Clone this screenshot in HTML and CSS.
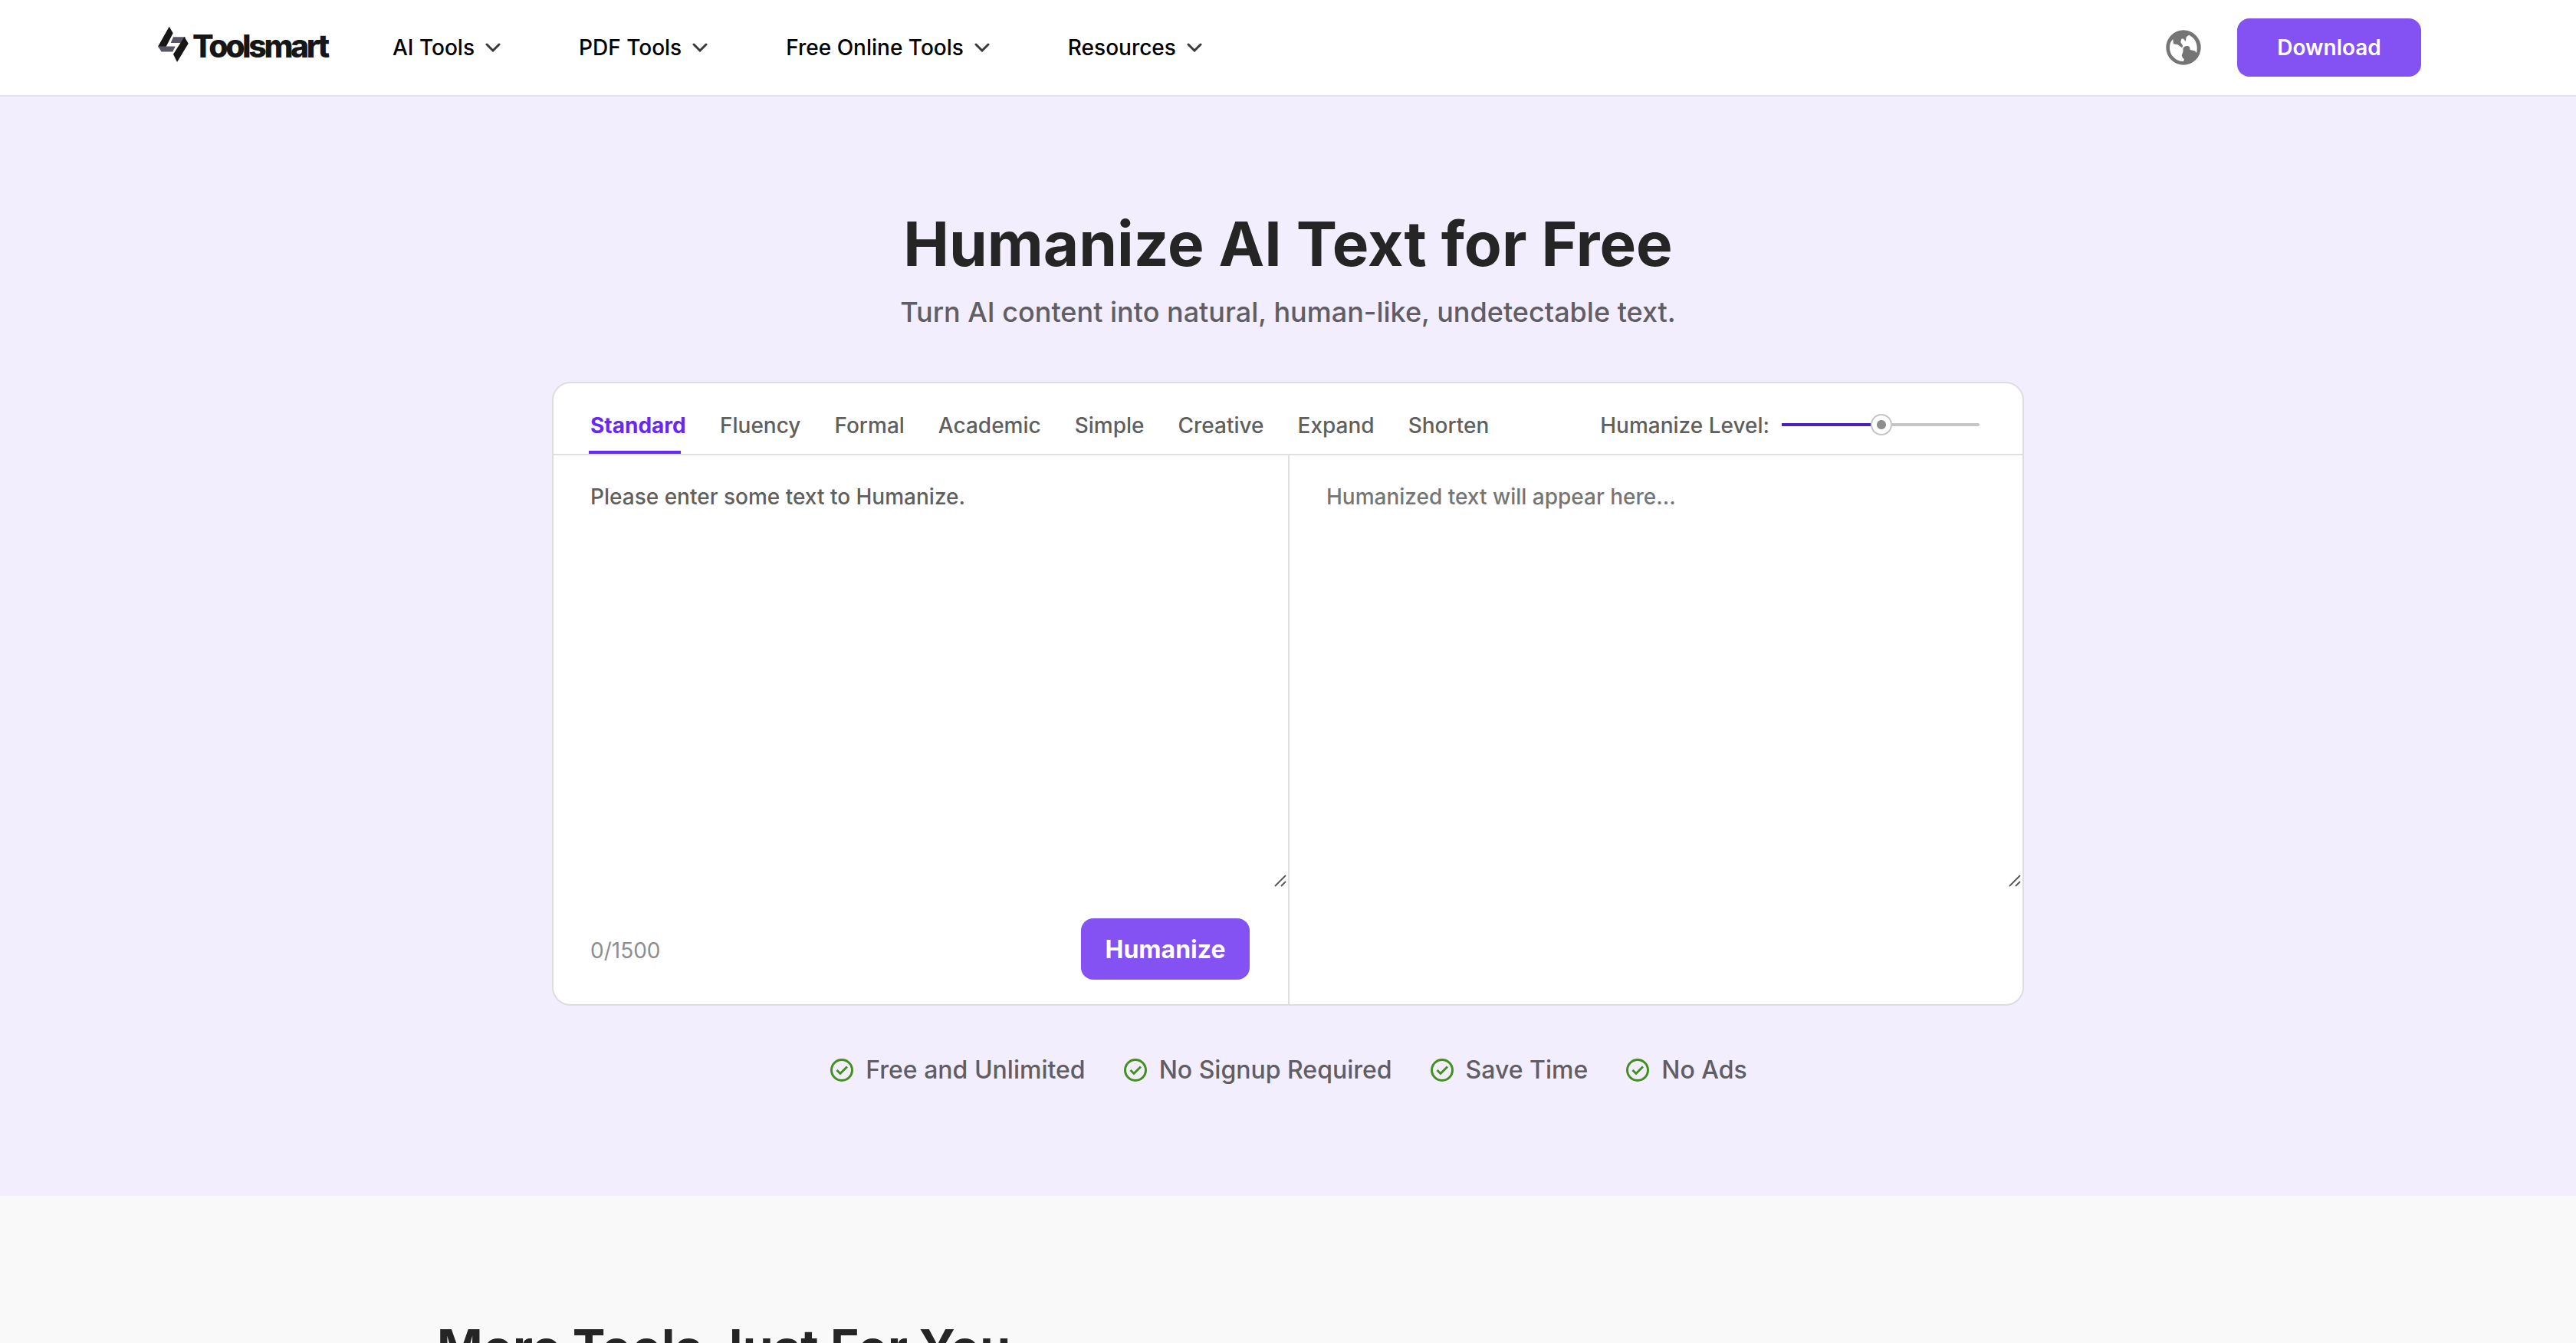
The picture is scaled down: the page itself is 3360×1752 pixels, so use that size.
FILE: index.html
```html
<!DOCTYPE html>
<html lang="en">

<head>
    <meta charset="utf-8">
    <title>Humanize AI Text for Free</title>
    <link rel="stylesheet" href="styles.css">
</head>

<body>
    <header class="header">
        <a href="#" class="logo">
            <svg class="logo-mark" viewBox="0 0 40 48" width="40" height="48">
                <path fill="#5a5562" d="M20 14.300h16L31 22H16.700zM0 26.500h22.700l-3.400 7H4.700z" />
                <path fill="#161616" d="M14.700 .7l5 8.600-9 17.400H0zM34.500 14l5.200 8.700L25 47l-5-10.300z" />
            </svg>
            <span class="logo-text">Toolsmart</span>
        </a>
        <nav class="nav">
            <a href="#"><span>AI Tools</span><svg class="chev" viewBox="0 0 20 12"><path d="M2 2l8 8 8-8" /></svg></a>
            <a href="#"><span>PDF Tools</span><svg class="chev" viewBox="0 0 20 12"><path d="M2 2l8 8 8-8" /></svg></a>
            <a href="#"><span>Free Online Tools</span><svg class="chev" viewBox="0 0 20 12"><path d="M2 2l8 8 8-8" /></svg></a>
            <a href="#"><span>Resources</span><svg class="chev" viewBox="0 0 20 12"><path d="M2 2l8 8 8-8" /></svg></a>
        </nav>
        <div class="header-right">
            <svg class="globe" viewBox="0 0 46 46">
                <circle cx="23" cy="23" r="22.700" fill="#757575" />
                <path fill="#fff" d="M9.300 12C6.500 14.500 5 18.500 5 23c0 5 2 10 5.500 13 3.500 3.500 8 5.200 12.500 5l1-3-1.700-1-1.600-3.300L22.500 28v-4c1-2 3-3 4.500-3 2 0 3.500 0 4 1.500l.7 3.500 6.300 1.500 2 2.500c.6-2 .8-5 .7-7.300-.2-4-1.500-8-4-11C34.500 9.300 32 7.500 30 6.700L26.700 9.300l-1 5.700-2.400-3c-1-.6-2.300-.6-3 0l-1 4 3 5-1.300 2.300-5.300-4-5.700-1z" />
            </svg>
            <a href="#" class="download">Download</a>
        </div>
    </header>

    <section class="hero">
        <h1>Humanize AI Text for Free</h1>
        <p class="sub">Turn AI content into natural, human-like, undetectable text.</p>

        <div class="card">
            <div class="card-top">
                <ul class="tabs">
                    <li class="active">Standard</li>
                    <li>Fluency</li>
                    <li>Formal</li>
                    <li>Academic</li>
                    <li>Simple</li>
                    <li>Creative</li>
                    <li>Expand</li>
                    <li>Shorten</li>
                </ul>
                <div class="level">
                    <span>Humanize Level:</span>
                    <div class="slider">
                        <span class="fill"></span>
                        <span class="knob"></span>
                        <span class="track"></span>
                    </div>
                </div>
            </div>
            <div class="card-body">
                <div class="pane">
                    <div class="text">Please enter some text to Humanize.</div>
                    <svg class="grip" viewBox="0 0 16 16"><path d="M1 15L15 1M9 15l6-6" /></svg>
                    <div class="pane-foot">
                        <span class="count">0/1500</span>
                        <button class="humanize">Humanize</button>
                    </div>
                </div>
                <div class="pane">
                    <div class="text out">Humanized text will appear here...</div>
                    <svg class="grip" viewBox="0 0 16 16"><path d="M1 15L15 1M9 15l6-6" /></svg>
                </div>
            </div>
        </div>

        <ul class="features">
            <li><svg viewBox="0 0 30 30"><circle cx="15" cy="15" r="13.500" /><path d="M8.500 15l4.500 4.500 9-9" /></svg><span>Free and Unlimited</span></li>
            <li><svg viewBox="0 0 30 30"><circle cx="15" cy="15" r="13.500" /><path d="M8.500 15l4.500 4.500 9-9" /></svg><span>No Signup Required</span></li>
            <li><svg viewBox="0 0 30 30"><circle cx="15" cy="15" r="13.500" /><path d="M8.500 15l4.500 4.500 9-9" /></svg><span>Save Time</span></li>
            <li><svg viewBox="0 0 30 30"><circle cx="15" cy="15" r="13.500" /><path d="M8.500 15l4.500 4.500 9-9" /></svg><span>No Ads</span></li>
        </ul>
    </section>

    <section class="more">
        <h2>More Tools Just For You</h2>
    </section>
</body>

</html>
```
FILE: styles.css
```css
* {
    margin: 0;
    padding: 0;
    box-sizing: border-box;
}

body {
    height: 1752px;
    overflow: hidden;
    font-family: Inter, "Liberation Sans", sans-serif;
    font-size: 28px;
    font-weight: 500;
    color: #5f5f5f;
    background: #f9f9f9;
}

li {
    list-style-type: none;
}

a {
    text-decoration: none;
    color: #000;
}

svg {
    display: block;
    flex-shrink: 0;
}

/* header */
.header {
    height: 126px;
    padding: 0 202px 0 206px;
    display: flex;
    align-items: center;
    background: #fff;
    border-bottom: 2px solid #e3dfee;
}

.logo {
    width: 306px;
    display: flex;
    align-items: center;
}

.logo-mark {
    margin-top: -8px;
}

.logo-text {
    margin-left: 5px;
    margin-top: -4px;
    font-size: 41px;
    font-weight: 800;
    letter-spacing: -3.4px;
    color: #161616;
}

.nav {
    display: flex;
    gap: 102px;
}

.nav a {
    display: flex;
    align-items: center;
    gap: 14px;
}

.chev {
    width: 20px;
    height: 12px;
    fill: none;
    stroke: #3a3a3a;
    stroke-width: 3;
    stroke-linecap: round;
}

.header-right {
    margin-left: auto;
    display: flex;
    align-items: center;
    gap: 47px;
}

.globe {
    width: 46px;
    height: 46px;
}

.download {
    width: 240px;
    height: 76px;
    line-height: 76px;
    text-align: center;
    font-weight: 600;
    color: #fff;
    background: #8451f2;
    border-radius: 16px;
}

/* hero */
.hero {
    height: 1434px;
    padding-top: 144px;
    text-align: center;
    background: #f3eefd;
}

h1 {
    line-height: 96px;
    font-size: 80px;
    font-weight: 700;
    color: #252525;
}

.sub {
    margin-top: 19px;
    line-height: 44px;
    font-size: 36px;
    color: #605d65;
}

.card {
    width: 1920px;
    height: 814px;
    margin: 69px auto 0;
    text-align: left;
    background: #fff;
    border: 2px solid #dddddf;
    border-radius: 24px;
}

.card-top {
    height: 94px;
    padding: 0 56px 0 46px;
    display: flex;
    justify-content: space-between;
    border-bottom: 2px solid #dfdfdf;
}

.tabs {
    display: flex;
    gap: 44px;
}

.tabs li {
    height: 92px;
    line-height: 111px;
}

.tabs .active {
    width: 127px;
    padding-left: 2px;
    font-weight: 700;
    color: #6728f4;
    background: linear-gradient(#6728f4, #6728f4) no-repeat 0 100% / 120px 4px;
}

.level {
    display: flex;
    line-height: 111px;
}

.slider {
    height: 28px;
    width: 258px;
    margin: 40px 0 0 16px;
    display: flex;
    align-items: center;
}

.fill {
    width: 116px;
    height: 4px;
    background: #4c20b8;
}

.knob {
    width: 28px;
    height: 28px;
    border: 2px solid #c5c5c5;
    border-radius: 50%;
    background: radial-gradient(circle, #8e8e8e 5.5px, #fff 6.5px);
}

.track {
    flex: 1;
    height: 4px;
    background: #c5c5c5;
    border-radius: 0 2px 2px 0;
}

.card-body {
    height: 716px;
    display: flex;
}

.pane {
    flex: 1;
    display: flex;
    flex-direction: column;
}

.pane:first-child {
    flex: 0 0 960px;
    border-right: 2px solid #dfdfdf;
}

.text {
    height: 547px;
    padding: 33px 0 0 48px;
    line-height: 42px;
}

.out {
    color: #757575;
}

.grip {
    width: 16px;
    height: 16px;
    margin: 0 2px 0 auto;
    fill: none;
    stroke: #555;
    stroke-width: 1.8;
}

.pane-foot {
    margin-top: 41px;
    padding: 0 50px 0 48px;
    display: flex;
    align-items: center;
    justify-content: space-between;
}

.count {
    padding-top: 4px;
    font-weight: 400;
    color: #8e8e8e;
}

.humanize {
    width: 220px;
    height: 80px;
    border: none;
    border-radius: 16px;
    font-family: inherit;
    font-size: 32px;
    font-weight: 700;
    color: #fff;
    background: #8451f2;
}

.features {
    margin-top: 64px;
    padding-left: 2px;
    display: flex;
    justify-content: center;
    gap: 50px;
    line-height: 40px;
    font-size: 32px;
    color: #605d65;
}

.features li {
    display: flex;
    align-items: center;
    gap: 16px;
}

.features svg {
    width: 30px;
    height: 30px;
    fill: none;
    stroke: #40911d;
    stroke-width: 3;
}

/* more tools */
.more {
    padding: 159px 0 0 570px;
}

h2 {
    line-height: 78px;
    font-size: 64px;
    font-weight: 700;
    color: #252525;
}
```
